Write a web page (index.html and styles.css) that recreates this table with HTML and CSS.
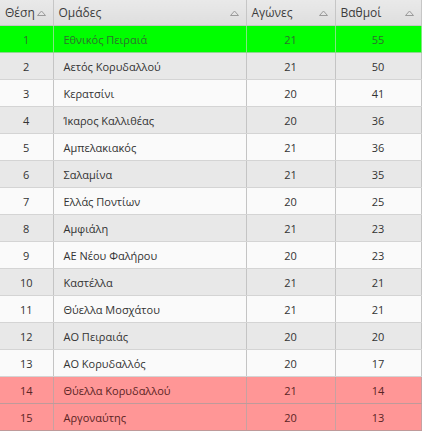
FILE: index.html
```html
<!DOCTYPE html>
<html>
<head>
<meta charset="utf-8">
<link rel="stylesheet" href="styles.css">
</head>
<body>
<table class="grid">
  <colgroup>
    <col class="c-pos"><col class="c-team"><col class="c-games"><col class="c-pts">
  </colgroup>
  <thead>
    <tr>
      <th><span class="hd">Θέση</span><svg class="sort" viewBox="0 0 9 6" width="9" height="6"><path d="M0.5 5.5 L4.5 1 L8.5 5.5 Z" fill="#e4e4e4" stroke="#9a9a9a" stroke-width="1"/></svg></th>
      <th><span class="hd">Ομάδες</span><svg class="sort" viewBox="0 0 9 6" width="9" height="6"><path d="M0.5 5.5 L4.5 1 L8.5 5.5 Z" fill="#e4e4e4" stroke="#9a9a9a" stroke-width="1"/></svg></th>
      <th><span class="hd">Αγώνες</span><svg class="sort" viewBox="0 0 9 6" width="9" height="6"><path d="M0.5 5.5 L4.5 1 L8.5 5.5 Z" fill="#e4e4e4" stroke="#9a9a9a" stroke-width="1"/></svg></th>
      <th><span class="hd">Βαθμοί</span><svg class="sort" viewBox="0 0 9 6" width="9" height="6"><path d="M0.5 5.5 L4.5 1 L8.5 5.5 Z" fill="#e4e4e4" stroke="#9a9a9a" stroke-width="1"/></svg></th>
    </tr>
  </thead>
  <tbody>
    <tr class="up"><td>1</td><td>Εθνικός Πειραιά</td><td>21</td><td>55</td></tr>
    <tr class="alt"><td>2</td><td>Αετός Κορυδαλλού</td><td>21</td><td>50</td></tr>
    <tr><td>3</td><td>Κερατσίνι</td><td>20</td><td>41</td></tr>
    <tr class="alt"><td>4</td><td>Ίκαρος Καλλιθέας</td><td>20</td><td>36</td></tr>
    <tr><td>5</td><td>Αμπελακιακός</td><td>21</td><td>36</td></tr>
    <tr class="alt"><td>6</td><td>Σαλαμίνα</td><td>21</td><td>35</td></tr>
    <tr><td>7</td><td>Ελλάς Ποντίων</td><td>20</td><td>25</td></tr>
    <tr class="alt"><td>8</td><td>Αμφιάλη</td><td>21</td><td>23</td></tr>
    <tr><td>9</td><td>ΑΕ Νέου Φαλήρου</td><td>20</td><td>23</td></tr>
    <tr class="alt"><td>10</td><td>Καστέλλα</td><td>21</td><td>21</td></tr>
    <tr><td>11</td><td>Θύελλα Μοσχάτου</td><td>21</td><td>21</td></tr>
    <tr class="alt"><td>12</td><td>ΑΟ Πειραιάς</td><td>20</td><td>20</td></tr>
    <tr><td>13</td><td>ΑΟ Κορυδαλλός</td><td>20</td><td>17</td></tr>
    <tr class="down"><td>14</td><td>Θύελλα Κορυδαλλού</td><td>21</td><td>14</td></tr>
    <tr class="down"><td>15</td><td>Αργοναύτης</td><td>20</td><td>13</td></tr>
  </tbody>
</table>
</body>
</html>
```
FILE: styles.css
```css
html, body {
  margin: 0;
  padding: 0;
  background: #ffffff;
}
.grid {
  border-collapse: collapse;
  table-layout: fixed;
  width: 421px;
  font-family: "Open Sans", "DejaVu Sans", sans-serif;
  font-size: 11px;
  color: #333333;
}
.c-pos { width: 53px; }
.c-team { width: 193px; }
.c-games { width: 89px; }
.c-pts { width: 86px; }
.grid th {
  height: 25px;
  padding: 0 7px 0 5px;
  text-align: left;
  font-weight: normal;
  font-size: 12px;
  color: #3c3c3c;
  background: linear-gradient(#e9e9e9, #dedede);
  border-right: 1px solid #c6c6c6;
  border-bottom: 1px solid #c6c6c6;
  white-space: nowrap;
}
.grid th .hd {
  float: left;
  line-height: 25px;
}
.grid th .sort {
  float: right;
  margin-top: 10px;
}
.grid td {
  height: 26px;
  padding: 0;
  text-align: center;
  border-right: 1px solid #c4c4c4;
  border-bottom: 1px solid #d4d4d4;
  background: #fafafa;
  white-space: nowrap;
}
.grid td:nth-child(2) {
  text-align: left;
  padding-left: 10px;
}
.grid tr.alt td {
  background: #e8e8e8;
}
.grid tr.up td {
  background: #00ff00;
  color: #2f6f2f;
  border-right-color: #7fe67f;
  border-bottom-color: #8fd88f;
}
.grid tr.down td {
  background: #ff9696;
  color: #5a2424;
  border-right-color: #c7a1a1;
  border-bottom-color: #bf9a9a;
}
```
